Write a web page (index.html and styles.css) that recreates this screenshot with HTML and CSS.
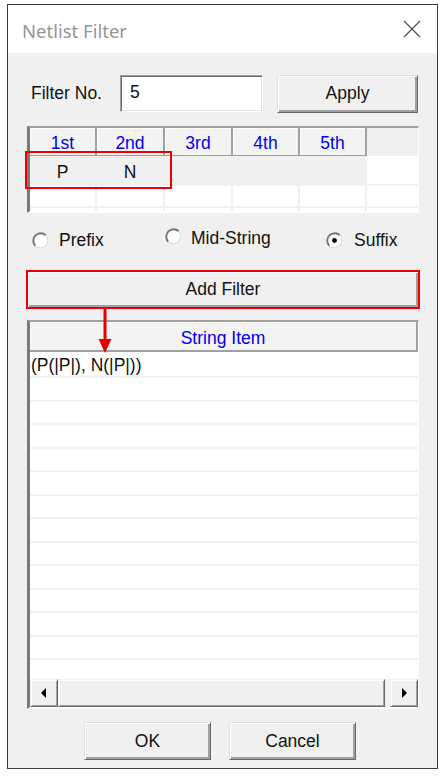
FILE: index.html
```html
<!DOCTYPE html>
<html>
<head>
<meta charset="utf-8">
<title>Netlist Filter</title>
<link rel="stylesheet" href="styles.css">
</head>
<body>
<div class="window">
  <div class="titlebar">
    <span class="title">Netlist Filter</span>
    <svg class="close" width="18" height="18" viewBox="0 0 18 18"><path d="M1 1 L17 17 M17 1 L1 17" stroke="#4a4a4a" stroke-width="1.1" fill="none"/></svg>
  </div>
  <div class="dialog">
    <div class="filter-row">
      <span class="lbl">Filter No.</span>
      <div class="input">5</div>
      <button class="btn apply">Apply</button>
    </div>

    <div class="grid-frame">
      <div class="grid">
        <div class="hcell">1st</div>
        <div class="hcell">2nd</div>
        <div class="hcell">3rd</div>
        <div class="hcell">4th</div>
        <div class="hcell">5th</div>
        <div class="hfill"></div>

        <div class="cell sel">P</div>
        <div class="cell sel">N</div>
        <div class="cell sel"></div>
        <div class="cell sel"></div>
        <div class="cell sel"></div>
        <div class="cell last"></div>

        <div class="cell"></div>
        <div class="cell"></div>
        <div class="cell"></div>
        <div class="cell"></div>
        <div class="cell"></div>
        <div class="cell last"></div>

        <div class="cell"></div>
        <div class="cell"></div>
        <div class="cell"></div>
        <div class="cell"></div>
        <div class="cell"></div>
        <div class="cell last"></div>
      </div>
    </div>

    <div class="radio-row">
      <div class="radio r1">
        <svg class="rb" width="17" height="17" viewBox="0 0 17 17"><circle cx="8.5" cy="8.5" r="7.4" fill="#fff"/><path d="M3.27 13.73 A7.4 7.4 0 0 1 13.73 3.27" stroke="#747474" stroke-width="1.9" fill="none"/><path d="M13.73 3.27 A7.4 7.4 0 0 1 3.27 13.73" stroke="#dcdcdc" stroke-width="1.2" fill="none"/></svg>
        <span>Prefix</span>
      </div>
      <div class="radio r2">
        <svg class="rb" width="17" height="17" viewBox="0 0 17 17"><circle cx="8.5" cy="8.5" r="7.4" fill="#fff"/><path d="M3.27 13.73 A7.4 7.4 0 0 1 13.73 3.27" stroke="#747474" stroke-width="1.9" fill="none"/><path d="M13.73 3.27 A7.4 7.4 0 0 1 3.27 13.73" stroke="#dcdcdc" stroke-width="1.2" fill="none"/></svg>
        <span>Mid-String</span>
      </div>
      <div class="radio r3">
        <svg class="rb" width="17" height="17" viewBox="0 0 17 17"><circle cx="8.5" cy="8.5" r="7.4" fill="#fff"/><path d="M3.27 13.73 A7.4 7.4 0 0 1 13.73 3.27" stroke="#747474" stroke-width="1.9" fill="none"/><path d="M13.73 3.27 A7.4 7.4 0 0 1 3.27 13.73" stroke="#dcdcdc" stroke-width="1.2" fill="none"/><circle cx="8.5" cy="8.5" r="2.4" fill="#000"/></svg>
        <span>Suffix</span>
      </div>
    </div>

    <button class="btn add">Add Filter</button>

    <div class="list-frame">
      <div class="list-head">String Item</div>
      <div class="list-rows">
        <div class="row first">(P(|P|), N(|P|))</div>
        <div class="row"></div>
        <div class="row"></div>
        <div class="row"></div>
        <div class="row"></div>
        <div class="row"></div>
        <div class="row"></div>
        <div class="row"></div>
        <div class="row"></div>
        <div class="row"></div>
        <div class="row"></div>
        <div class="row"></div>
        <div class="row"></div>
        <div class="row"></div>
      </div>
      <div class="hscroll">
        <div class="sb-btn"><svg width="6" height="10" viewBox="0 0 6 10"><path d="M5 0 L0 5 L5 10 Z" fill="#000"/></svg></div>
        <div class="sb-thumb"></div>
        <div class="sb-btn"><svg width="6" height="10" viewBox="0 0 6 10"><path d="M1 0 L6 5 L1 10 Z" fill="#000"/></svg></div>
      </div>
    </div>

    <div class="actions">
      <button class="btn act">OK</button>
      <button class="btn act">Cancel</button>
    </div>

    <div class="redbox"></div>
    <svg class="arrow" width="14" height="46" viewBox="0 0 14 46"><path d="M7 0 V34" stroke="#e60000" stroke-width="3"/><path d="M0.5 31 L13.5 31 L7 45 Z" fill="#e60000"/></svg>
  </div>
</div>
</body>
</html>
```

FILE: styles.css
```css
* { box-sizing: border-box; }

html, body {
  margin: 0;
  padding: 0;
  background: #ffffff;
}

body {
  font-family: "Liberation Sans", Arial, sans-serif;
  font-size: 17.5px;
  color: #111;
}

.window {
  margin: 4px 0 0 7px;
  width: 431px;
  height: 765px;
  border: 1px solid #3c3c3c;
  display: flex;
  flex-direction: column;
  background: #f0f0f0;
}

.titlebar {
  height: 48px;
  background: #ffffff;
  display: flex;
  align-items: center;
  justify-content: space-between;
  padding: 2px 16px 0 14px;
  flex: none;
}

.title {
  font-family: "Noto Sans", "Open Sans", sans-serif;
  font-size: 18.5px;
  color: #959595;
}

.close { display: block; margin-top: -2px; }

.dialog {
  position: relative;
  flex: 1;
  padding: 22px 18px 0 19px;
  display: flex;
  flex-direction: column;
}

/* raised 3D control */
.btn {
  font-family: inherit;
  font-size: 17.5px;
  color: #111;
  background: #f0f0f0;
  border: 1px solid;
  border-color: #e3e3e3 #696969 #696969 #e3e3e3;
  box-shadow: inset 1px 1px #ffffff, inset -2px -2px #a0a0a0;
  padding: 0;
  margin: 0;
  display: flex;
  align-items: center;
  justify-content: center;
}

.filter-row {
  display: flex;
  align-items: center;
  height: 37px;
  padding-left: 4px;
}

.lbl { width: 89px; }

.input {
  width: 143px;
  height: 37px;
  background: #fff;
  border: 1px solid;
  border-color: #a0a0a0 #ffffff #ffffff #a0a0a0;
  box-shadow: inset 1px 1px #696969, inset -1px -1px #e3e3e3;
  padding: 6px 0 0 9px;
}

.apply {
  width: 141px;
  height: 38px;
  margin-left: 14px;
}

/* upper grid */
.grid-frame {
  margin-top: 14px;
  height: 87px;
  border-style: solid;
  border-width: 2px 1px 2px 3px;
  border-color: #a0a0a0 #ffffff #ffffff #7a7a7a;
  overflow: hidden;
  background: #f0f0f0;
}

.grid {
  display: grid;
  grid-template-columns: 67px 68px 68px 67px 67px 1fr;
  grid-template-rows: 28px 30px 22px 22px;
}

.hcell {
  background: #f3f3f3;
  color: #0000ee;
  border-right: 2px solid #a0a0a0;
  border-bottom: 1px solid #a0a0a0;
  box-shadow: inset 1px 1px #ffffff;
  display: flex;
  align-items: center;
  justify-content: center;
  padding-top: 3px;
}

.hfill { background: #f0f0f0; }

.cell {
  background: #ffffff;
  border-right: 2px solid #f0f0f0;
  border-bottom: 2px solid #f0f0f0;
  display: flex;
  align-items: center;
  justify-content: center;
}

.cell.sel { background: #f0f0f0; padding-top: 5px; }
.cell.last { border-right: none; }

/* radio buttons */
.radio-row {
  height: 58px;
  display: flex;
  align-items: center;
  padding: 0 0 4px 5px;
}

.radio {
  display: flex;
  align-items: center;
}

.rb { display: block; flex: none; }

.r1 { width: 133px; }
.r1 span { margin-left: 10px; }
.r2 { width: 161px; margin-bottom: 4px; }
.r2 .rb { margin-top: -4px; }
.r2 span { margin-left: 9px; }
.r3 span { margin-left: 11px; }

.add {
  height: 37px;
  width: 100%;
  outline: 2px solid #ee0000;
  outline-offset: -1px;
}

/* list */
.list-frame {
  margin-top: 12px;
  height: 389px;
  border-style: solid;
  border-width: 2px 1px 2px 3px;
  border-color: #a0a0a0 #ffffff #ffffff #7a7a7a;
  display: flex;
  flex-direction: column;
  background: #fff;
  overflow: hidden;
}

.list-head {
  flex: none;
  height: 30px;
  background: #f3f3f3;
  color: #0000ee;
  border-right: 2px solid #a0a0a0;
  border-bottom: 2px solid #a0a0a0;
  box-shadow: inset 1px 1px #ffffff;
  display: flex;
  align-items: center;
  justify-content: center;
  padding-top: 4px;
}

.list-rows {
  flex: none;
  height: 327px;
  overflow: hidden;
}

.row {
  height: 23.5px;
  border-bottom: 2px solid #f0f0f0;
  display: flex;
  align-items: center;
  padding-left: 1px;
}

.row.first { height: 26px; padding-top: 3px; }

.hscroll {
  flex: none;
  height: 28px;
  display: flex;
  background: #f0f0f0;
}

.sb-btn, .sb-thumb {
  background: #f0f0f0;
  border: 1px solid;
  border-color: #f0f0f0 #696969 #696969 #f0f0f0;
  box-shadow: inset 1px 1px #ffffff, inset -1px -1px #a0a0a0;
}

.sb-btn {
  width: 28px;
  flex: none;
  display: flex;
  align-items: center;
  justify-content: center;
}

.sb-thumb {
  flex: 1;
  margin-right: 5px;
}

.actions {
  margin-top: 13px;
  display: flex;
  padding-left: 57px;
  gap: 18px;
}

.act {
  width: 127px;
  height: 38px;
}

/* annotations drawn over the dialog */
.redbox {
  position: absolute;
  left: 17px;
  top: 98px;
  width: 147px;
  height: 38px;
  border: 2px solid #ee0000;
}

.arrow {
  position: absolute;
  left: 90px;
  top: 255px;
}
```
